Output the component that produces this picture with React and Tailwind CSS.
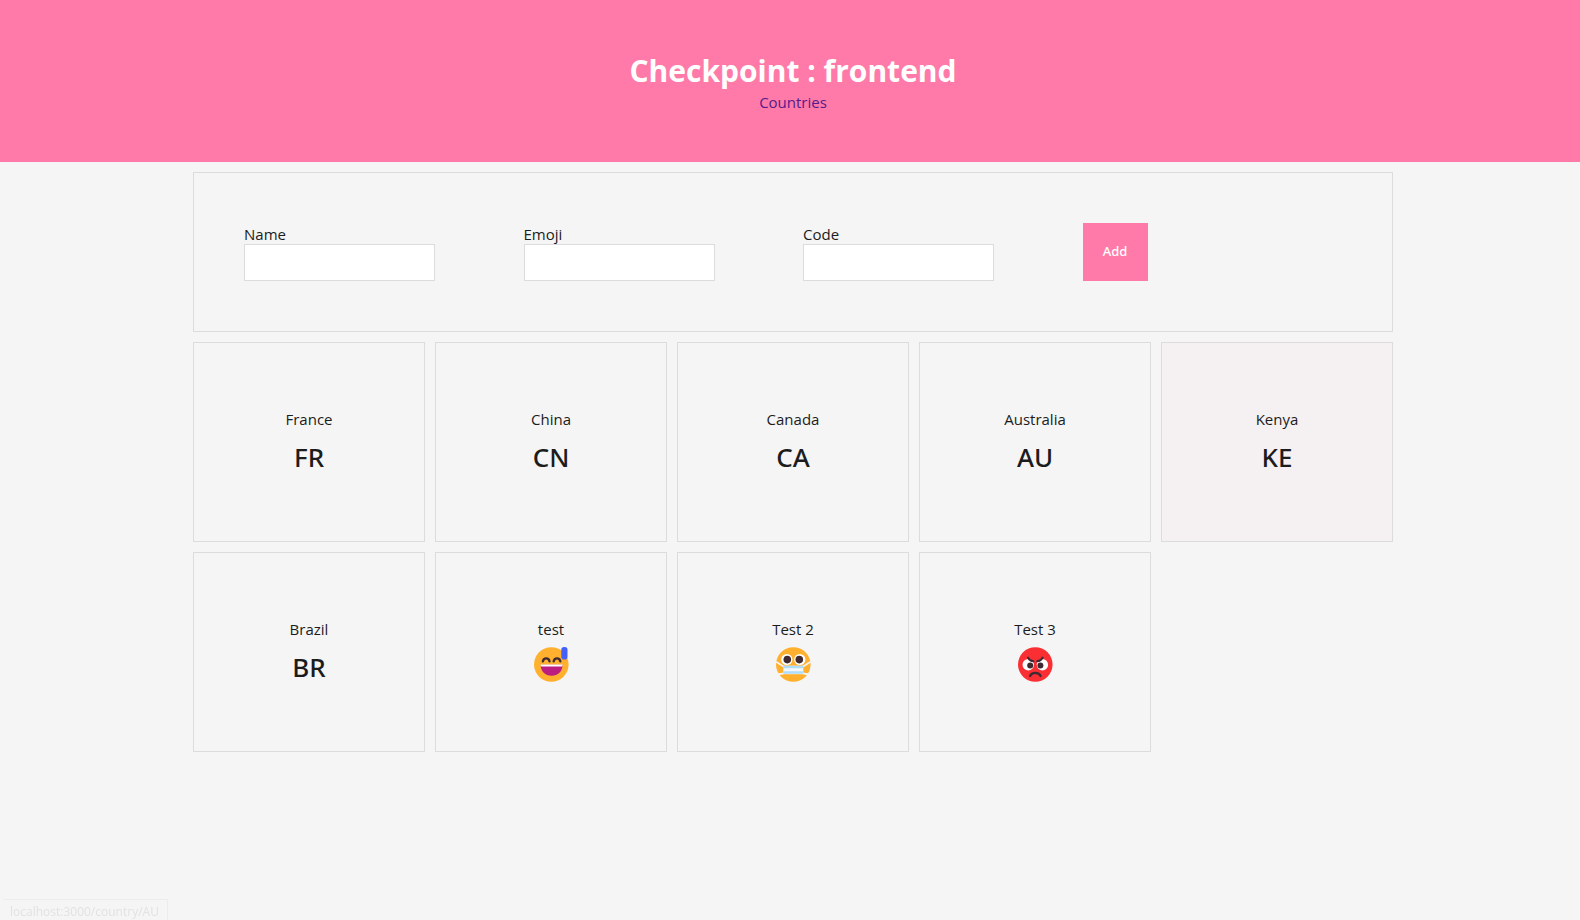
import React from "react";

function SweatSmile() {
  return (
    <svg viewBox="0 0 35 35" className="size-[35px]" role="img" aria-label="Grinning face with sweat">
      <circle cx="17.3" cy="17.5" r="17.3" fill="#ffb02e" />
      <path d="M8.9 14.4c.6-4 6-4 6.600 0M19.700 14.400c.6-4 6-4 6.600 0" fill="none" stroke="#402a32" strokeWidth="2.4" strokeLinecap="round" />
      <path d="M6.8 17.7h21.600c.3 6.800-4.500 11-10.800 11s-11.100-4.200-10.800-11z" fill="#bb1d80" />
      <path d="M6.7 17.500h21.800v1c0 .6-.6 1.100-1.600 1.100H8.300c-1 0-1.600-.5-1.600-1.100z" fill="#fff" />
      <rect x="27.3" y="0" width="6.2" height="12.500" rx="2.800" fill="#4560f8" />
    </svg>
  );
}

function MaskFace() {
  return (
    <svg viewBox="0 0 35 35" className="size-[35px]" role="img" aria-label="Face with medical mask">
      <circle cx="17.300" cy="17.500" r="17.300" fill="#ffb02e" />
      <circle cx="10.800" cy="12.500" r="5.600" fill="#fff" />
      <circle cx="23.800" cy="12.500" r="5.600" fill="#fff" />
      <circle cx="11.300" cy="12.600" r="3.800" fill="#402a32" />
      <circle cx="23.300" cy="12.600" r="3.800" fill="#402a32" />
      <path d="M0 14.800l7.500 4.600M34.600 14.800l-7.500 4.600M1 27.500l7-1.200M33.600 27.500l-7-1.200" fill="none" stroke="#f4f4f4" strokeWidth="1.800" />
      <path d="M7.300 18.700h20v8.500h-20z" fill="#f4f8fc" />
      <path d="M7.300 20h20M7.300 25.500h20" stroke="#aedcfb" strokeWidth="2.600" />
    </svg>
  );
}

function AngryFace() {
  return (
    <svg viewBox="0 0 35 35" className="size-[35px]" role="img" aria-label="Enraged face">
      <circle cx="17.300" cy="17.500" r="17.300" fill="#f92f34" />
      <circle cx="10.200" cy="17.800" r="5.700" fill="#fff" />
      <circle cx="24.400" cy="17.800" r="5.700" fill="#fff" />
      <circle cx="12.200" cy="18.400" r="3" fill="#402a32" />
      <circle cx="22.400" cy="18.400" r="3" fill="#402a32" />
      <path d="M9.600 11l6 3.500 1.800 1 1.800-1 6-3.500-3-2h-9.600z" fill="#f92f34" />
      <path d="M10 10.600c1 2.200 3 3.500 5.400 3.700M24.600 10.600c-1 2.200-3 3.500-5.400 3.700" fill="none" stroke="#402a32" strokeWidth="2" strokeLinecap="round" />
      <path d="M12 29c1.600-4.300 9-4.300 10.600 0" fill="none" stroke="#402a32" strokeWidth="2.200" strokeLinecap="round" />
    </svg>
  );
}

const countries = [
  { name: "France", code: "FR" },
  { name: "China", code: "CN" },
  { name: "Canada", code: "CA" },
  { name: "Australia", code: "AU" },
  { name: "Kenya", code: "KE", active: true },
  { name: "Brazil", code: "BR" },
  { name: "test", Icon: SweatSmile },
  { name: "Test 2", Icon: MaskFace },
  { name: "Test 3", Icon: AngryFace },
];

const fields = ["Name", "Emoji", "Code"];

function CountryCard({ name, code, Icon, active }) {
  return (
    <a
      href="#country"
      className={
        "flex h-[200px] flex-col items-center border border-[#dcdcdc] pt-[66px] " +
        (active ? "bg-[#f5f0f2]" : "")
      }
    >
      <span className="leading-[21px]">{name}</span>
      {Icon ? (
        <span className="mt-[7px]">
          <Icon />
        </span>
      ) : (
        <span className="font-['Noto_Sans','Open_Sans',sans-serif] text-[26px] leading-[54px] font-medium">{code}</span>
      )}
    </a>
  );
}

export default function App() {
  return (
    <div className="min-h-screen bg-[#f5f5f5] font-['Open_Sans','Noto_Sans',sans-serif] text-[15px] text-[#1c1c1c]">
      <header className="flex flex-col items-center bg-[#ff7aa8] pt-[50px] pb-[49px] pl-1.5">
        <h1 className="text-[30px] leading-[42px] font-bold text-white">Checkpoint : frontend</h1>
        <a href="#countries" className="leading-[21px] text-[#551a8b]">
          Countries
        </a>
      </header>
      <main className="pl-1.5">
        <div className="mx-auto flex max-w-[1200px] flex-col gap-2.5 py-2.5">
          <form
            className="grid grid-cols-4 gap-5 border border-[#dcdcdc] p-[50px]"
            onSubmit={(e) => e.preventDefault()}
          >
            {fields.map((f) => (
              <div key={f} className="flex flex-col items-start">
                <label htmlFor={f} className="pt-px leading-5">
                  {f}
                </label>
                <input id={f} type="text" className="h-[37px] w-[191px] border border-[#dcdcdc] bg-white px-2.5 outline-none" />
              </div>
            ))}
            <button type="submit" className="w-[65px] bg-[#ff7aa8] font-['Noto_Sans','Open_Sans',sans-serif] text-[13px] font-medium text-white">
              Add
            </button>
          </form>
          <section className="grid grid-cols-5 gap-2.5">
            {countries.map((c) => (
              <CountryCard key={c.name} {...c} />
            ))}
          </section>
        </div>
      </main>
      <div className="fixed bottom-0 left-[3px] w-[165px] border-t border-r border-[#ececec] pt-1 pl-[7px] text-[12px] leading-4 whitespace-nowrap text-[#e2e2e2]">
        localhost:3000/country/AU
      </div>
    </div>
  );
}
